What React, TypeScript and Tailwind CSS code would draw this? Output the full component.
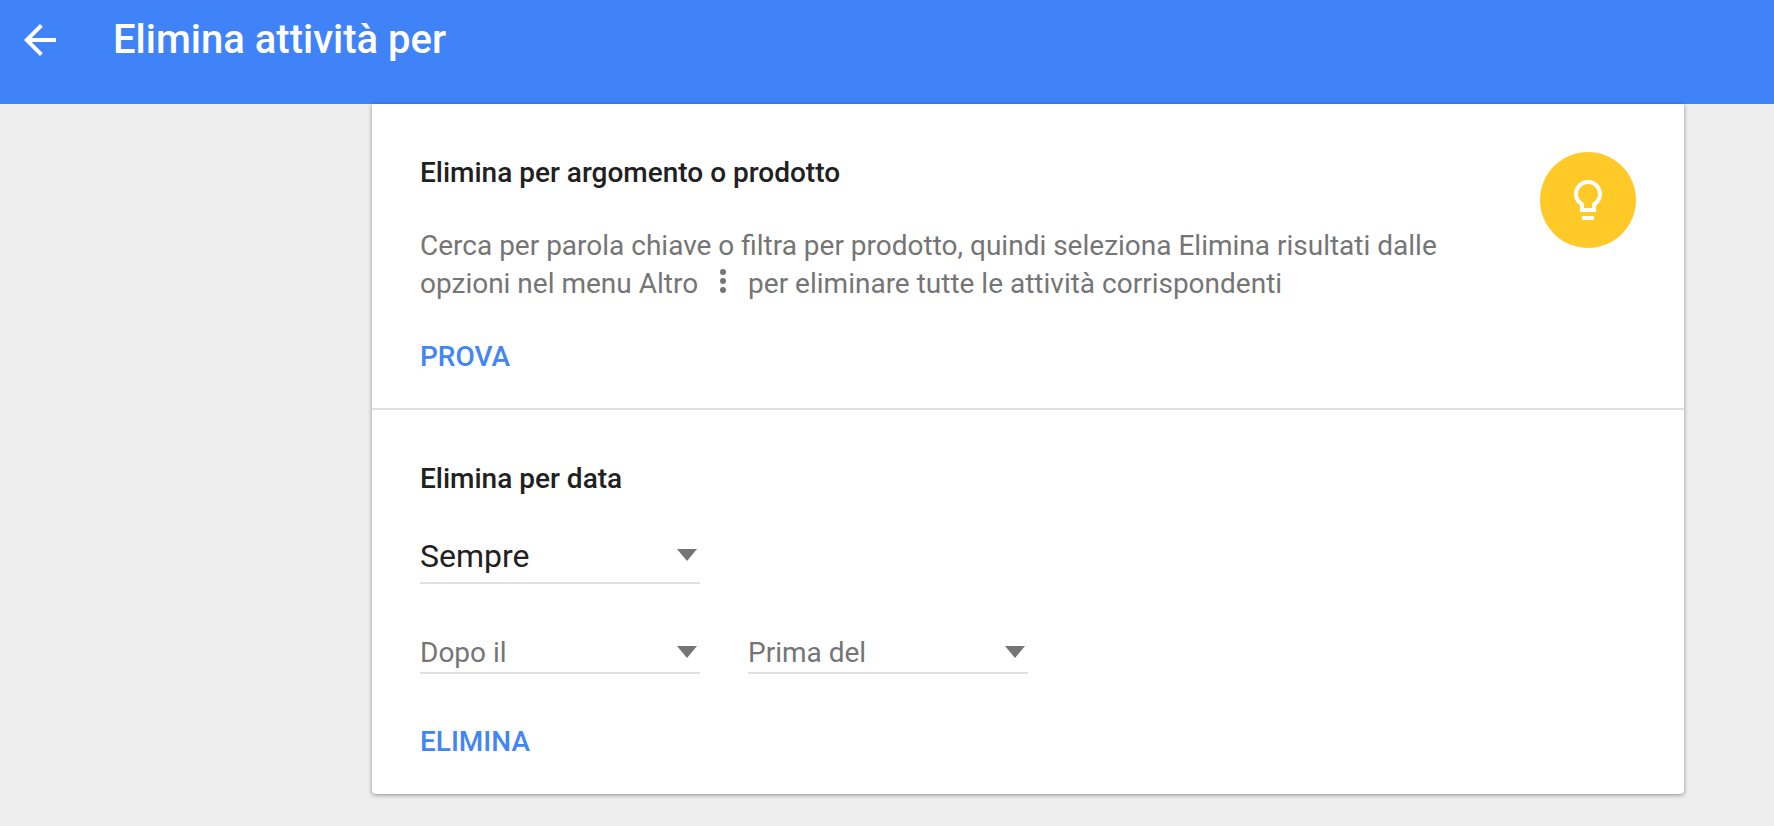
function Caret() {
  return (
    <svg width="20" height="12" viewBox="0 0 20 12" className="mb-[2px] shrink-0">
      <path d="M0 0h20L10 12z" fill="#757575" />
    </svg>
  );
}

function Select({ label, big }: { label: string; big?: boolean }) {
  return (
    <div
      className={
        big
          ? "flex h-[50px] w-[280px] items-center justify-between border-b-2 border-[#e0e0e0] pr-[3px] pb-[4px] text-[32px] text-[#212121]"
          : "flex h-[44px] w-[280px] items-center justify-between border-b-2 border-[#e0e0e0] pr-[3px] pt-[4px] text-[28px] text-[#757575]"
      }
    >
      <span className="leading-none">{label}</span>
      <Caret />
    </div>
  );
}

export default function App() {
  return (
    <div className="min-h-[826px] bg-[#eeeeee] font-['Roboto',sans-serif]">
      <header className="flex h-[104px] items-start bg-[#4083f9] pl-4 pt-4 text-white">
        <svg width="48" height="48" viewBox="0 0 24 24" fill="white" className="shrink-0">
          <path d="M20 11H7.83l5.59-5.59L12 4l-8 8 8 8 1.41-1.41L7.83 13H20v-2z" />
        </svg>
        <h1 className="ml-[49px] text-[40px] leading-[48px] font-medium">Elimina attività per</h1>
      </header>

      <main className="ml-[372px] w-[1312px] rounded-b-[4px] bg-white shadow-[0_1px_4px_rgba(0,0,0,0.4)]">
        <section className="flex h-[306px] items-start justify-between border-b-2 border-[#e0e0e0] px-12 pt-[49px]">
          <div>
            <h2 className="text-[28px] leading-[40px] font-medium text-[#212121]">Elimina per argomento o prodotto</h2>
            <p className="mt-[34px] text-[28px] leading-[38px] text-[#757575]">
              Cerca per parola chiave o filtra per prodotto, quindi seleziona Elimina risultati dalle
              <br />
              opzioni nel menu Altro
              <svg width="36" height="36" viewBox="0 0 24 24" fill="#757575" className="mx-[7px] -my-[2px] inline-block align-[-4px]">
                <circle cx="12" cy="6" r="2" />
                <circle cx="12" cy="12" r="2" />
                <circle cx="12" cy="18" r="2" />
              </svg>
              per eliminare tutte le attività corrispondenti
            </p>
            <button className="mt-[34px] text-[28px] leading-[40px] font-medium text-[#4285f4]">PROVA</button>
          </div>
          <div className="-mt-[1px] flex size-24 shrink-0 items-center justify-center rounded-full bg-[#ffca28]">
            <svg width="48" height="48" viewBox="0 0 24 24" fill="white">
              <path d="M9 20h6v2H9zM12 2C8.14 2 5 5.14 5 9c0 2.38 1.19 4.47 3 5.74V18h8v-3.26c1.81-1.27 3-3.36 3-5.74 0-3.86-3.14-7-7-7zm2.85 11.1l-.85.6V16h-4v-2.3l-.85-.6C7.8 12.16 7 10.63 7 9c0-2.76 2.24-5 5-5s5 2.24 5 5c0 1.63-.8 3.16-2.15 4.1z" />
            </svg>
          </div>
        </section>

        <section className="h-[384px] px-12 pt-[49px]">
          <h2 className="text-[28px] leading-[40px] font-medium text-[#212121]">Elimina per data</h2>
          <div className="mt-[35px]">
            <Select label="Sempre" big />
          </div>
          <div className="mt-[46px] flex gap-12">
            <Select label="Dopo il" />
            <Select label="Prima del" />
          </div>
          <button className="mt-[48px] text-[28px] leading-[40px] font-medium text-[#4285f4]">ELIMINA</button>
        </section>
      </main>
    </div>
  );
}
